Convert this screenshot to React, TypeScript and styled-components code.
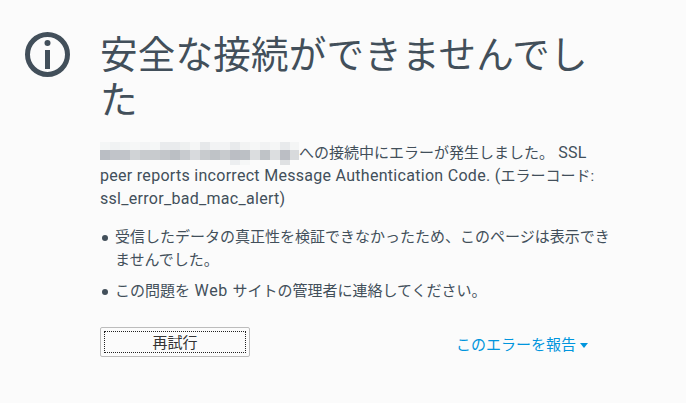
import React from "react";
import styled, { createGlobalStyle } from "styled-components";

const GlobalStyle = createGlobalStyle`
  * { box-sizing: border-box; }
  body { margin: 0; background: #fbfbfb; }
`;

const Page = styled.main`
  display: flex;
  width: 686px;
  height: 403px;
  overflow: hidden;
  padding: 32px 0 0 25px;
  background: #fbfbfb;
  color: #424f5a;
  font: 400 15px/23px Roboto, "Noto Sans CJK JP", sans-serif;
  white-space: nowrap;
`;

const InfoIcon = styled.svg`
  flex: none;
  width: 45px;
  height: 45px;
  margin-right: 30px;
`;

const Content = styled.div`
  width: 520px;
  margin-top: -3px;
`;

const Title = styled.h1`
  margin: 0;
  height: 113px;
  font: 400 37.5px/45px "Noto Sans CJK JP", sans-serif;
  letter-spacing: 0.25px;
`;

const Description = styled.p`
  margin: 0;
  height: 84px;
`;

const Line = styled.span`
  display: flex;
  height: 23px;
`;

const Latin = styled.span<{ $spacing?: number }>`
  font-size: 16px;
  line-height: 22px;
  white-space: pre;
  letter-spacing: ${(p) => p.$spacing ?? 0.29}px;
`;

const Mosaic = styled.svg`
  flex: none;
  width: 199px;
  height: 23px;
`;

const Reasons = styled.ul`
  display: flex;
  flex-direction: column;
  gap: 8px;
  margin: 0;
  padding: 0;
  list-style: none;
`;

const Reason = styled.li`
  display: flex;

  &::before {
    content: "";
    flex: none;
    width: 6px;
    height: 6px;
    margin: 9px 7px 0 2px;
    border-radius: 50%;
    background: currentColor;
  }
`;

const Actions = styled.div`
  display: flex;
  justify-content: space-between;
  width: 488px;
  margin-top: 24px;
`;

const RetryButton = styled.button`
  width: 150px;
  height: 30px;
  padding: 3px;
  border: 1px solid #bcbcbc;
  border-radius: 2px;
  background: #fbfbfb;
  color: #333;
  font: 15px/20px "Noto Sans CJK JP", sans-serif;
`;

const FocusRing = styled.span`
  display: block;
  height: 22px;
  border: 1px dotted #222;
`;

const ReportLink = styled.a`
  display: flex;
  align-items: center;
  gap: 4px;
  height: 23px;
  margin-top: 7px;
  color: #0095dd;
`;

const Caret = styled.svg`
  width: 8px;
  height: 5px;
`;

const topCells = ["#f4f6f6", "#f0f2f3", "#f3f5f5", "#f6f7f7", "#f3f4f5", "#f5f7f7", "#e9ebed", "#e9ebed", "#eef0f0", "#f5f6f6", "#e6e8ea", "#f2f3f4", "#f2f3f4", "#e8eaec", "#f2f3f3", "#f6f7f7", "#f1f2f3", "#f5f6f6", "#e8eaec", "#f4f5f5"];
const middleCells = ["#babec4", "#c1c4c9", "#c1c4c9", "#d0d3d6", "#c8cbce", "#c8cbce", "#c3c6ca", "#bbbfc4", "#c8cbcf", "#d8dadd", "#c8cbce", "#bfc3c7", "#c8cbce", "#bbbec4", "#bcc0c5", "#dbdddf", "#bfc3c7", "#dcdee0", "#bbbec4", "#d8dadc"];

const bottomCells = [
  { x: 130, color: "#eceef0" },
  { x: 140, color: "#f6f7f7" },
  { x: 180, color: "#dfe1e3" },
];

function MaskedHost() {
  return (
    <Mosaic viewBox="0 0 199 23" shapeRendering="crispEdges">
      {topCells.map((c, i) => (
        <rect key={`t${i}`} x={i * 10} y={0} width={10} height={8} fill={c} />
      ))}
      {middleCells.map((c, i) => (
        <rect key={`m${i}`} x={i * 10} y={8} width={10} height={10} fill={c} />
      ))}
      {bottomCells.map((c) => (
        <rect key={c.x} x={c.x} y={18} width={10} height={5} fill={c.color} />
      ))}
    </Mosaic>
  );
}

export default function App() {
  return (
    <>
      <GlobalStyle />
      <Page>
        <InfoIcon viewBox="0 0 45 45" fill="#424f5a">
          <circle cx="22.5" cy="22.5" r="20" fill="none" stroke="#424f5a" strokeWidth="5" />
          <circle cx="22.5" cy="11" r="3" />
          <rect x="20" y="18" width="5" height="19" />
        </InfoIcon>
        <Content>
          <Title>
            安全な接続ができませんでし
            <br />た
          </Title>
          <Description>
            <Line>
              <MaskedHost />
              への接続中にエラーが発生しました。<Latin> SSL</Latin>
            </Line>
            <Line>
              <Latin>peer reports incorrect Message Authentication Code. (</Latin>エラーコード:
            </Line>
            <Line>
              <Latin>ssl_error_bad_mac_alert)</Latin>
            </Line>
          </Description>
          <Reasons>
            <Reason>
              <span>
                受信したデータの真正性を検証できなかったため、このページは表示でき
                <br />
                ませんでした。
              </span>
            </Reason>
            <Reason>
              <span>
                この問題を<Latin $spacing={0.6}> Web </Latin>サイトの管理者に連絡してください。
              </span>
            </Reason>
          </Reasons>
          <Actions>
            <RetryButton>
              <FocusRing>再試行</FocusRing>
            </RetryButton>
            <ReportLink>
              このエラーを報告
              <Caret viewBox="0 0 8 5">
                <path d="M0 0H8L4 5Z" fill="#0095dd" />
              </Caret>
            </ReportLink>
          </Actions>
        </Content>
      </Page>
    </>
  );
}
